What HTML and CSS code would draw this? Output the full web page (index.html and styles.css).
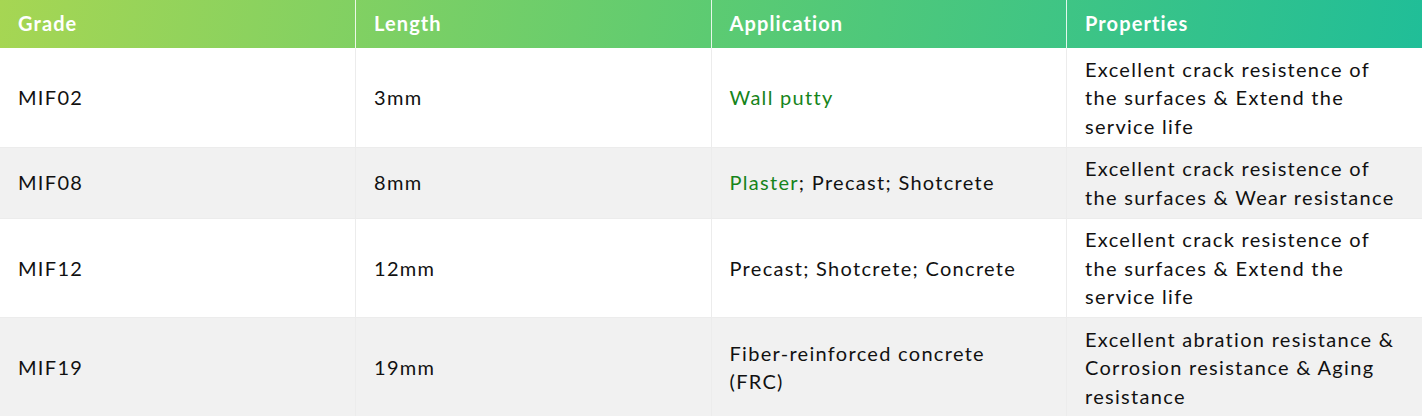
FILE: index.html
```html
<!DOCTYPE html>
<html>
<head>
<meta charset="utf-8">
<link rel="stylesheet" href="styles.css">
</head>
<body>
<table class="spec">
  <thead>
    <tr>
      <th>Grade</th>
      <th>Length</th>
      <th>Application</th>
      <th>Properties</th>
    </tr>
  </thead>
  <tbody>
    <tr>
      <td>MIF02</td>
      <td>3mm</td>
      <td><span class="link">Wall putty</span></td>
      <td>Excellent crack resistence of the surfaces &amp; Extend the service life</td>
    </tr>
    <tr>
      <td>MIF08</td>
      <td>8mm</td>
      <td><span class="link">Plaster</span>; Precast; Shotcrete</td>
      <td>Excellent crack resistence of the surfaces &amp; Wear resistance</td>
    </tr>
    <tr>
      <td>MIF12</td>
      <td>12mm</td>
      <td>Precast; Shotcrete; Concrete</td>
      <td>Excellent crack resistence of the surfaces &amp; Extend the service life</td>
    </tr>
    <tr>
      <td>MIF19</td>
      <td>19mm</td>
      <td>Fiber-reinforced concrete (FRC)</td>
      <td>Excellent abration resistance &amp; Corrosion resistance &amp; Aging resistance</td>
    </tr>
  </tbody>
</table>
</body>
</html>
```

FILE: styles.css
```css
html, body {
  margin: 0;
  padding: 0;
  background: #ffffff;
}
body {
  font-family: Lato, "Open Sans", sans-serif;
  color: #111111;
}
.spec {
  width: 1422px;
  border-collapse: collapse;
  table-layout: fixed;
}
.spec thead tr {
  background: linear-gradient(100deg, #a6d653 0%, #5ccb72 50%, #20be98 100%);
}
.spec th {
  height: 48px;
  padding: 0 18px 2px 18px;
  text-align: left;
  font-size: 20px;
  font-weight: 700;
  letter-spacing: 1.1px;
  color: #ffffff;
  border-right: 1px solid rgba(255,255,255,0.85);
  box-sizing: border-box;
}
.spec th:last-child,
.spec td:last-child {
  border-right: none;
}
.spec td {
  padding: 6.5px 26px 6.5px 18px;
  font-size: 20px;
  line-height: 28.5px;
  letter-spacing: 1.3px;
  vertical-align: middle;
  border-right: 1px solid #ececec;
  border-bottom: 1px solid #ececec;
}
.spec tbody tr:nth-child(even) td {
  background: #f1f1f1;
}
.spec .link {
  color: #16841a;
}
```
